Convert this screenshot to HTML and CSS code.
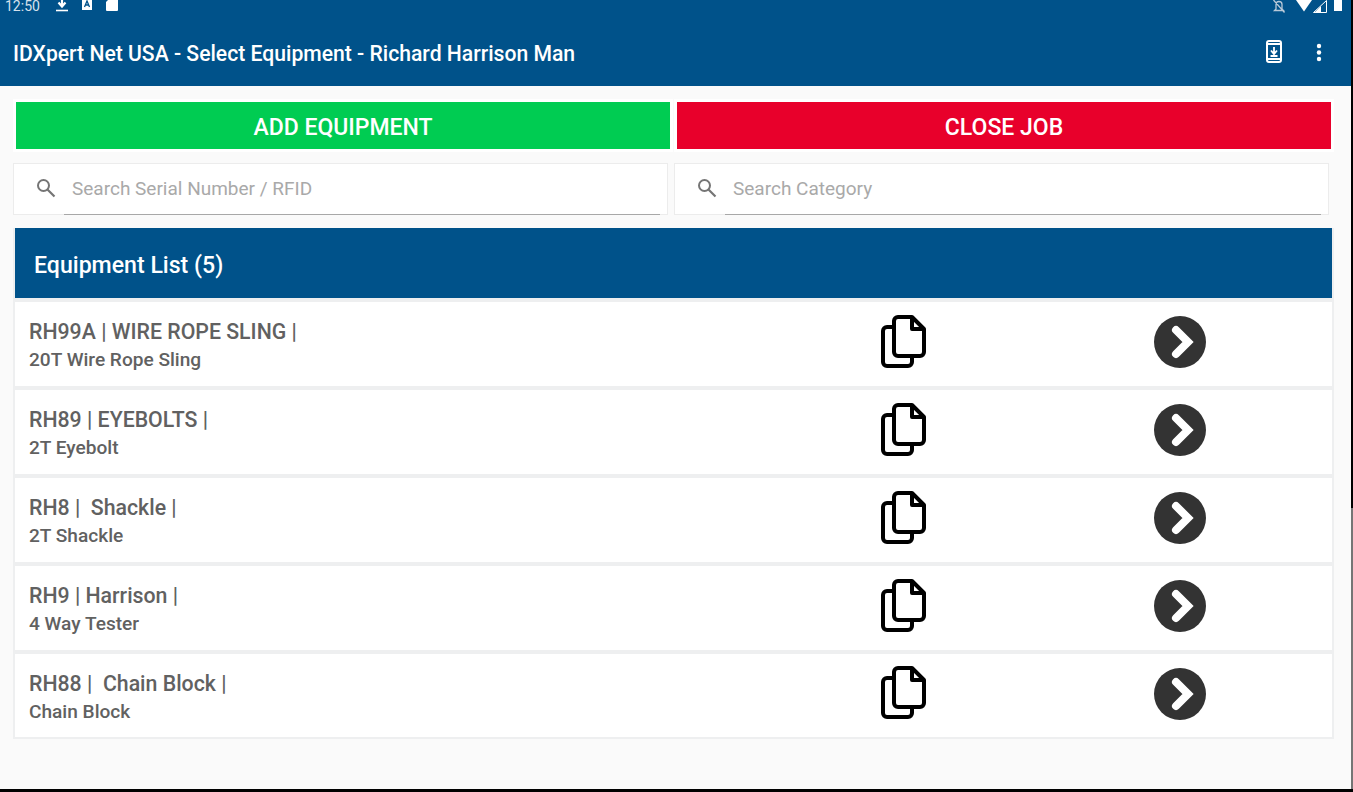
FILE: index.html
```html
<!DOCTYPE html>
<html lang="en">
<head>
<meta charset="utf-8">
<title>Select Equipment</title>
<link rel="stylesheet" href="styles.css">
</head>
<body>
<div class="screen">
  <header class="appbar">
    <div class="status">
      <span class="clock">12:50</span>
      <svg class="st-ic" width="14" height="14" viewBox="0 0 14 14"><path d="M7 0v7M3.5 4.500 7 8.500l3.500-4" fill="none" stroke="#fff" stroke-width="2.200"/><path d="M1 12.500h12" stroke="#fff" stroke-width="1.600"/></svg>
      <svg class="st-ic st-a" width="12" height="14" viewBox="0 0 12 14"><path d="M1 0h10v12H1z" fill="#fff"/><path d="M3.500 9 6 3l2.500 6M4.500 7h3" fill="none" stroke="#00528a" stroke-width="1.300"/></svg>
      <svg class="st-ic st-sd" width="12" height="14" viewBox="0 0 12 14"><path d="M4 0h7a1 1 0 0 1 1 1v11a1 1 0 0 1-1 1H1a1 1 0 0 1-1-1V4z" fill="#fff"/></svg>
      <span class="st-fill"></span>
      <svg class="st-bell" width="14" height="13" viewBox="0 0 14 13"><path d="M4 9V4.500a3 3 0 0 1 6 0V9l1.500 1.500h-9zM1.500 0 12.500 12.500" fill="none" stroke="#b9c9d8" stroke-width="1.300"/></svg>
      <svg class="st-wifi" width="16" height="12" viewBox="0 0 16 12"><path d="M0 0h16L8 11.500z" fill="#fff"/></svg>
      <svg class="st-cell" width="14" height="13" viewBox="0 0 14 13"><path d="M13.500.5v12H.5z" fill="none" stroke="#fff"/><path d="M8 6v6.500H1.500z" fill="#fff"/></svg>
      <span class="st-batt"></span>
    </div>
    <div class="toolbar">
      <h1 class="title">IDXpert Net USA - Select Equipment - Richard Harrison Man</h1>
      <svg class="tb-phone" width="16" height="23" viewBox="0 0 16 23"><rect x="1" y="1" width="14" height="21" rx="2" fill="none" stroke="#fff" stroke-width="2"/><path d="M1 4h14M1 19h14" stroke="#fff" stroke-width="2"/><path d="M8 7v6.500M5 10.500l3 3.500 3-3.500M4.500 16h7" fill="none" stroke="#fff" stroke-width="1.800"/></svg>
      <svg class="tb-dots" width="6" height="20" viewBox="0 0 6 20"><circle cx="3" cy="3" r="2.200" fill="#fff"/><circle cx="3" cy="9.500" r="2.200" fill="#fff"/><circle cx="3" cy="16" r="2.200" fill="#fff"/></svg>
    </div>
  </header>

  <main class="content">
    <div class="actions">
      <button class="btn btn-add">ADD EQUIPMENT</button>
      <button class="btn btn-close">CLOSE JOB</button>
    </div>

    <div class="searches">
      <label class="search">
        <svg class="search-ic" width="20" height="20" viewBox="0 0 20 20"><circle cx="7.500" cy="7.500" r="5.500" fill="none" stroke="#757575" stroke-width="2"/><path d="m11.500 11.500 7 7" stroke="#757575" stroke-width="2.200"/></svg>
        <input class="search-in" type="text" placeholder="Search Serial Number / RFID">
      </label>
      <label class="search">
        <svg class="search-ic" width="20" height="20" viewBox="0 0 20 20"><circle cx="7.500" cy="7.500" r="5.500" fill="none" stroke="#757575" stroke-width="2"/><path d="m11.500 11.500 7 7" stroke="#757575" stroke-width="2.200"/></svg>
        <input class="search-in" type="text" placeholder="Search Category">
      </label>
    </div>

    <section class="list">
      <h2 class="list-head">Equipment List (5)</h2>
      <div class="rows">
        <div class="row">
          <div class="row-text"><div class="row-title">RH99A | WIRE ROPE SLING |</div><div class="row-sub">20T Wire Rope Sling</div></div>
          <svg class="ic-copy" width="46" height="53" viewBox="0 0 46 53"><path d="M32 2H18a4 4 0 0 0-4 4v31a4 4 0 0 0 4 4h22a4 4 0 0 0 4-4V14zM32 2v12h12M14 12H7a4 4 0 0 0-4 4v31a4 4 0 0 0 4 4h21a4 4 0 0 0 4-4v-6" fill="none" stroke="#000" stroke-width="4" stroke-linejoin="round"/></svg>
          <svg class="ic-go" width="52" height="52" viewBox="0 0 52 52"><circle cx="26" cy="26" r="26" fill="#333"/><path d="M22 14 34 26 22 38" fill="none" stroke="#fff" stroke-width="8" stroke-linecap="round" stroke-linejoin="miter"/></svg>
        </div>
        <div class="row">
          <div class="row-text"><div class="row-title">RH89 | EYEBOLTS |</div><div class="row-sub">2T Eyebolt</div></div>
          <svg class="ic-copy" width="46" height="53" viewBox="0 0 46 53"><path d="M32 2H18a4 4 0 0 0-4 4v31a4 4 0 0 0 4 4h22a4 4 0 0 0 4-4V14zM32 2v12h12M14 12H7a4 4 0 0 0-4 4v31a4 4 0 0 0 4 4h21a4 4 0 0 0 4-4v-6" fill="none" stroke="#000" stroke-width="4" stroke-linejoin="round"/></svg>
          <svg class="ic-go" width="52" height="52" viewBox="0 0 52 52"><circle cx="26" cy="26" r="26" fill="#333"/><path d="M22 14 34 26 22 38" fill="none" stroke="#fff" stroke-width="8" stroke-linecap="round" stroke-linejoin="miter"/></svg>
        </div>
        <div class="row">
          <div class="row-text"><div class="row-title">RH8 |&nbsp; Shackle |</div><div class="row-sub">2T Shackle</div></div>
          <svg class="ic-copy" width="46" height="53" viewBox="0 0 46 53"><path d="M32 2H18a4 4 0 0 0-4 4v31a4 4 0 0 0 4 4h22a4 4 0 0 0 4-4V14zM32 2v12h12M14 12H7a4 4 0 0 0-4 4v31a4 4 0 0 0 4 4h21a4 4 0 0 0 4-4v-6" fill="none" stroke="#000" stroke-width="4" stroke-linejoin="round"/></svg>
          <svg class="ic-go" width="52" height="52" viewBox="0 0 52 52"><circle cx="26" cy="26" r="26" fill="#333"/><path d="M22 14 34 26 22 38" fill="none" stroke="#fff" stroke-width="8" stroke-linecap="round" stroke-linejoin="miter"/></svg>
        </div>
        <div class="row">
          <div class="row-text"><div class="row-title">RH9 | Harrison |</div><div class="row-sub">4 Way Tester</div></div>
          <svg class="ic-copy" width="46" height="53" viewBox="0 0 46 53"><path d="M32 2H18a4 4 0 0 0-4 4v31a4 4 0 0 0 4 4h22a4 4 0 0 0 4-4V14zM32 2v12h12M14 12H7a4 4 0 0 0-4 4v31a4 4 0 0 0 4 4h21a4 4 0 0 0 4-4v-6" fill="none" stroke="#000" stroke-width="4" stroke-linejoin="round"/></svg>
          <svg class="ic-go" width="52" height="52" viewBox="0 0 52 52"><circle cx="26" cy="26" r="26" fill="#333"/><path d="M22 14 34 26 22 38" fill="none" stroke="#fff" stroke-width="8" stroke-linecap="round" stroke-linejoin="miter"/></svg>
        </div>
        <div class="row">
          <div class="row-text"><div class="row-title">RH88 |&nbsp; Chain Block |</div><div class="row-sub">Chain Block</div></div>
          <svg class="ic-copy" width="46" height="53" viewBox="0 0 46 53"><path d="M32 2H18a4 4 0 0 0-4 4v31a4 4 0 0 0 4 4h22a4 4 0 0 0 4-4V14zM32 2v12h12M14 12H7a4 4 0 0 0-4 4v31a4 4 0 0 0 4 4h21a4 4 0 0 0 4-4v-6" fill="none" stroke="#000" stroke-width="4" stroke-linejoin="round"/></svg>
          <svg class="ic-go" width="52" height="52" viewBox="0 0 52 52"><circle cx="26" cy="26" r="26" fill="#333"/><path d="M22 14 34 26 22 38" fill="none" stroke="#fff" stroke-width="8" stroke-linecap="round" stroke-linejoin="miter"/></svg>
        </div>
      </div>
    </section>
  </main>
  <div class="edge"></div>
</div>
</body>
</html>
```
FILE: styles.css
```css
* { box-sizing: border-box; }
html, body { margin: 0; height: 100%; overflow: hidden; background: #000; }
body { font-family: Roboto, "Liberation Sans", sans-serif; }

.screen {
  display: grid;
  grid-template-columns: 1351px 2px;
  grid-template-rows: 86px 703px;
  width: 1353px;
  height: 789px;
}

.appbar { grid-column: 1 / 2; background: #00528a; overflow: hidden; }
.status {
  display: flex;
  align-items: center;
  height: 12px;
  padding-left: 5px;
  color: #d5e1ec;
  font-size: 14px;
}
.clock { width: 50px; }
.st-ic { flex: none; margin-top: -3px; }
.st-a { margin-left: 12px; }
.st-sd { margin-left: 13px; }
.st-fill { flex: 1; }
.st-bell { flex: none; margin-right: 10px; }
.st-wifi { flex: none; margin-right: 1px; margin-top: -1px; }
.st-cell { flex: none; margin-right: 7px; }
.st-batt { flex: none; width: 8px; height: 12px; margin-right: 9px; margin-top: -2px; background: #fff; }

.toolbar { display: flex; align-items: center; height: 74px; padding: 10px 0 0 13px; }
.title { flex: 1; margin: 0; color: #fff; font-size: 21.150px; font-weight: 500; line-height: 24px; white-space: nowrap; }
.tb-phone { flex: none; margin: -5px 34px 0 0; }
.tb-dots { flex: none; margin: -3px 29px 0 0; }

.content { grid-column: 1 / 2; grid-row: 2; background: #fafafa; padding: 13px 0 0 13px; }
.edge { grid-column: 2; grid-row: 1 / 3; background: linear-gradient(#000 0, #000 422px, #757575 422px); margin-top: 86px; }

.actions { display: grid; grid-template-columns: 660px 660px; gap: 1px; }
.btn {
  height: 53px;
  border: 3px solid #fff;
  color: #fff;
  font: 500 23px/1 Roboto, sans-serif;
  padding: 4px 0 0;
}
.btn-add { background: #00cc52; }
.btn-close { background: #e8002b; }

.searches { display: grid; grid-template-columns: 655px 655px; gap: 6px; margin-top: 11px; }
.search {
  display: flex;
  align-items: center;
  height: 52px;
  background: #fff;
  border: 1px solid #ececec;
  padding-left: 22px;
}
.search-ic { flex: none; margin-top: -2px; }
.search-in {
  flex: none;
  width: 596px;
  height: 51px;
  margin-left: 8px;
  padding: 0 0 1px 8px;
  border: 0;
  border-bottom: 1px solid #a8a8a8;
  outline: 0;
  background: transparent;
  font: 400 19px Roboto, sans-serif;
  color: #333;
}
.search-in::placeholder { color: #a9a9a9; opacity: 1; }

.list {
  width: 1321px;
  margin-top: 13px;
  border: 2px solid #eeeff0;
  border-top: 0;
  background: #eeeff0;
}
.list-head {
  display: flex;
  align-items: center;
  height: 70px;
  margin: 0;
  padding: 4px 0 0 19px;
  background: #00528a;
  color: #fff;
  font-size: 23.100px;
  font-weight: 500;
}
.rows { display: flex; flex-direction: column; gap: 4px; padding-top: 4px; }
.row { display: flex; align-items: center; height: 84px; padding-left: 14px; background: #fff; }
.row:last-child { height: 83px; }
.row-text { flex: none; width: 851px; margin-top: 4px; color: #616161; font-weight: 500; }
.row-title { font-size: 21.300px; line-height: 28px; }
.row-sub { font-size: 19.100px; line-height: 28px; }
.ic-copy { flex: none; margin-top: -6px; }
.ic-go { flex: none; margin: -4px 0 0 228px; }
```
